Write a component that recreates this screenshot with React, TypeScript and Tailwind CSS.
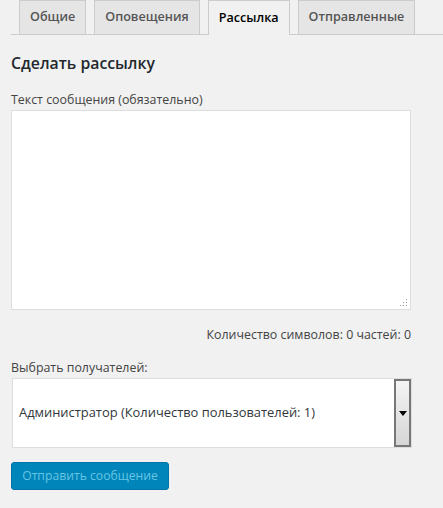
export default function App() {
  const tabs = ["Общие", "Оповещения", "Рассылка", "Отправленные"];
  const active = "Рассылка";

  return (
    <div
      className="min-h-[508px] w-[443px] bg-[#f1f1f1] pl-[11px] text-[12.4px] text-[#444]"
      style={{ fontFamily: '"Open Sans", "Noto Sans", sans-serif' }}
    >
      {/* Tabs */}
      <div className="flex gap-2 border-b border-[#ccc] pl-2">
        {tabs.map((tab) =>
          tab === active ? (
            <div
              key={tab}
              className="-mb-px flex h-[35px] items-center border-x border-t border-[#ccc] bg-[#f1f1f1] px-[10px] text-[12.6px] font-semibold text-black"
            >
              {tab}
            </div>
          ) : (
            <div
              key={tab}
              className="flex h-[34px] items-center border-x border-t border-[#ccc] bg-[#e5e5e5] px-[10px] text-[12.6px] font-semibold text-[#555]"
            >
              {tab}
            </div>
          )
        )}
      </div>

      {/* Heading */}
      <h2 className="mt-[17px] text-[15.8px] leading-[23px] font-semibold text-[#23282d]">
        Сделать рассылку
      </h2>

      {/* Message */}
      <div className="mt-4 leading-[18px]">Текст сообщения (обязательно)</div>
      <div className="relative mt-px h-[200px] w-[400px] border border-[#ddd] bg-white">
        <svg
          className="absolute right-[2px] bottom-[2px]"
          width="8"
          height="8"
          viewBox="0 0 8 8"
        >
          <rect x="6" y="0" width="1" height="1" fill="#999" />
          <rect x="3" y="3" width="1" height="1" fill="#999" />
          <rect x="6" y="3" width="1" height="1" fill="#999" />
          <rect x="0" y="6" width="1" height="1" fill="#999" />
          <rect x="3" y="6" width="1" height="1" fill="#999" />
          <rect x="6" y="6" width="1" height="1" fill="#999" />
        </svg>
      </div>

      <div className="mt-4 w-[400px] text-right leading-[18px]">
        Количество символов: 0 частей: 0
      </div>

      {/* Recipients */}
      <div className="mt-[15px] leading-[18px]">Выбрать получателей:</div>
      <div className="mt-px ml-px flex h-[70px] w-[400px] border border-[#ddd] bg-white">
        <div className="flex flex-1 items-center pl-[6px] text-[12.9px] text-[#32373c]">
          Администратор (Количество пользователей: 1)
        </div>
        <div className="flex w-[17px] flex-col items-center border-2 border-[#777] bg-gradient-to-b from-[#f4f4f4] to-[#d6d6d6] pt-[30px]">
          <svg width="8" height="5" viewBox="0 0 8 5">
            <path d="M0 0H8L4 5Z" fill="#000" />
          </svg>
        </div>
      </div>

      {/* Submit */}
      <button
        type="button"
        className="mt-[14px] flex h-[28px] w-[158px] items-center justify-center rounded-[3px] border border-[#0073aa] bg-[#0085ba] text-[12.2px] text-[#66c6e4]"
      >
        Отправить сообщение
      </button>
    </div>
  );
}
